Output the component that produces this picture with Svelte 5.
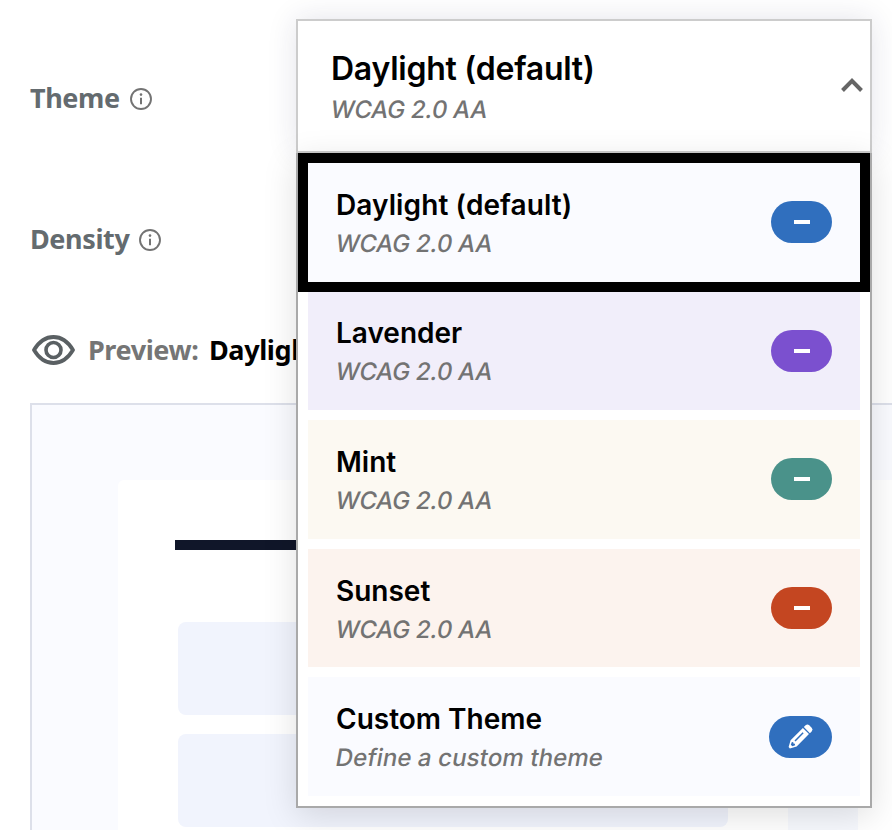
<script lang="ts">
	let open = true;
	let selected = 'daylight';

	const themes = [
		{ id: 'daylight', name: 'Daylight (default)', note: 'WCAG 2.0 AA' },
		{ id: 'lavender', name: 'Lavender', note: 'WCAG 2.0 AA' },
		{ id: 'mint', name: 'Mint', note: 'WCAG 2.0 AA' },
		{ id: 'sunset', name: 'Sunset', note: 'WCAG 2.0 AA' },
		{ id: 'custom', name: 'Custom Theme', note: 'Define a custom theme' }
	];

	$: current = themes.find((t) => t.id === selected) ?? themes[0];

	function choose(id: string) {
		selected = id;
	}
</script>

<div class="page">
	{#each ['Theme', 'Density'] as label}
		<div class="field">
			<span class="label {label.toLowerCase()}">{label}</span>
			<svg class="info" viewBox="0 0 22 22" width="22" height="22">
				<circle cx="11" cy="11" r="10" fill="none" stroke="#737373" stroke-width="1.9" />
				<circle cx="11" cy="6.6" r="1.3" fill="#737373" />
				<path d="M11 9.700v6.600" stroke="#737373" stroke-width="2" />
			</svg>
		</div>
	{/each}

	<div class="preview-title">
		<svg viewBox="0 0 44 30" width="44" height="30" fill="none" stroke="#5a6063">
			<path d="M2 15C6.500 7.500 13.500 2 21.500 2S36.500 7.500 41 15C36.500 22.500 29.500 28 21.500 28S6.500 22.500 2 15z" stroke-width="3.8" stroke-linejoin="round" />
			<circle cx="21.500" cy="15" r="7.500" stroke-width="3.600" />
		</svg>
		<span class="preview-label">Preview:</span>
		<span class="preview-name">{current.name}</span>
	</div>

	<div class="preview">
		<div class="sheet">
			<div class="main">
				<div class="bar"></div>
				<div class="block"></div>
				<div class="block"></div>
			</div>
			<div class="side"></div>
		</div>
	</div>

	<div class="picker">
		<button class="trigger" on:click={() => (open = !open)}>
			<span class="text">
				<span class="name">{current.name}</span>
				<span class="note">{current.note}</span>
			</span>
			<svg class="chevron" viewBox="0 0 24 16" width="24" height="16">
				<path d="M2.500 13.500L12 3.800l9.500 9.700" fill="none" stroke="#666" stroke-width="4" />
			</svg>
		</button>

		{#if open}
			<div class="options">
				{#each themes as t}
					<button class="option {t.id}" class:selected={t.id === selected} on:click={() => choose(t.id)}>
						<span class="text">
							<span class="name">{t.name}</span>
							<span class="note">{t.note}</span>
						</span>
						<span class="pill">
							{#if t.id === 'custom'}
								<svg class="pencil" viewBox="-12 -12 24 24" width="24" height="24" fill="#fff">
									<g transform="rotate(45)">
										<path d="M-4.300-9.700v-2.500a2.600 2.600 0 0 1 2.600-2.600h3.400a2.600 2.600 0 0 1 2.600 2.600v2.500z" />
										<path fill-rule="evenodd" d="M-4.300-8.400h8.600V9L.900 15.200h-1.800L-4.300 9zM-1.500-5.200V6.300H0V-5.200zM-2.300 9.200l1.200 2.700h2.200l1.200-2.700-1.200-.8-1.100.9-1.100-.9z" />
									</g>
								</svg>
							{:else}
								<span class="dash"></span>
							{/if}
						</span>
					</button>
				{/each}
			</div>
		{/if}
	</div>
</div>

<style>
	:global(body) {
		background: #fff;
	}

	.page {
		position: relative;
		box-sizing: border-box;
		width: 892px;
		height: 830px;
		padding: 28px 0 0 30px;
		overflow: hidden;
		font-family: 'Noto Sans', sans-serif;
		font-weight: 700;
		font-size: 27px;
		letter-spacing: -0.4px;
	}

	.field {
		display: flex;
		align-items: center;
		gap: 10px;
		height: 141px;
		color: #646b6f;
	}

	.label {
		padding-bottom: 2px;
		white-space: nowrap;
	}

	.theme {
		width: 90px;
	}

	.density {
		width: 99px;
	}

	.preview-title {
		display: flex;
		align-items: center;
		height: 80px;
		margin-bottom: 13px;
		white-space: nowrap;
	}

	.preview-title svg {
		margin: 0 12px 0 2px;
	}

	.preview-label,
	.preview-name {
		padding-bottom: 2px;
	}

	.preview-label {
		width: 121px;
		color: #757575;
	}

	.preview {
		box-sizing: border-box;
		width: 900px;
		height: 500px;
		padding: 75px 0 0 86px;
		border: 2px solid #dde0ea;
		background: #fafbff;
	}

	.sheet {
		display: flex;
		box-sizing: border-box;
		height: 420px;
		padding: 60px 0 0 57px;
		border-radius: 6px 0 0 0;
		background: #fff;
	}

	.main {
		width: 553px;
	}

	.bar {
		height: 10px;
		margin-bottom: 72px;
		background: #101629;
	}

	.block {
		height: 93px;
		margin: 0 0 19px 3px;
		border-radius: 8px;
		background: #f1f4fd;
	}

	.side {
		width: 70px;
		margin: 72px 0 0 60px;
		background: #f7f9fe;
	}

	.picker {
		position: absolute;
		top: 19px;
		left: 296px;
		width: 576px;
		font-family: Inter, sans-serif;
		letter-spacing: 0;
	}

	button {
		display: flex;
		align-items: center;
		justify-content: space-between;
		box-sizing: border-box;
		width: 100%;
		margin: 0;
		border: 0;
		font-family: inherit;
		text-align: left;
		cursor: pointer;
	}

	.text {
		display: flex;
		flex-direction: column;
		padding-top: 2px;
		white-space: nowrap;
	}

	.name {
		color: #000;
		font-size: 28px;
		font-weight: 600;
		line-height: 36px;
	}

	/* slanted upright letters, Inter's own italic has a single-storey a */
	.note {
		color: #737373;
		font-size: 24px;
		font-weight: 500;
		line-height: 32px;
		letter-spacing: -0.25px;
		margin-top: 5px;
		transform: skewX(-10deg);
	}

	.custom .note {
		letter-spacing: 0.1px;
	}

	.trigger {
		height: 134px;
		padding: 0 6px 2px 33px;
		border: 2px solid #ccc;
		background: #fff;
		box-shadow: 0 0 28px rgba(30, 30, 80, 0.12);
	}

	.trigger .text {
		padding-top: 4px;
	}

	.trigger .name {
		font-size: 32px;
		line-height: 40px;
		letter-spacing: -0.25px;
	}

	.options {
		position: relative;
		display: grid;
		grid-template-rows: repeat(5, 1fr);
		gap: 10px;
		box-sizing: border-box;
		height: 655px;
		padding: 10px;
		border: 2px solid #a9a9a9;
		border-top: 0;
		background: #fff;
		box-shadow: 0 8px 32px rgba(0, 0, 0, 0.13);
	}

	.option {
		padding: 0 28px;
		background: #fafbff;
	}

	.option.selected {
		position: relative;
		outline: 10px solid #000;
	}

	.option.selected .name {
		letter-spacing: 0.1px;
	}

	.lavender {
		background: #f1eefa;
	}

	.mint {
		background: #fcf9f2;
	}

	.sunset {
		background: #fcf3ee;
	}

	.pill {
		display: flex;
		align-items: center;
		justify-content: center;
		width: 61px;
		height: 42px;
		border-radius: 21px;
		background: #306fbe;
	}

	.lavender .pill {
		background: #7b50cf;
	}

	.mint .pill {
		background: #4a928a;
	}

	.sunset .pill {
		background: #c44621;
	}

	.custom .pill {
		width: 63px;
	}

	.pencil {
		margin-right: 1px;
		overflow: visible;
	}

	.dash {
		width: 16px;
		height: 4px;
		background: #fff;
	}
</style>
